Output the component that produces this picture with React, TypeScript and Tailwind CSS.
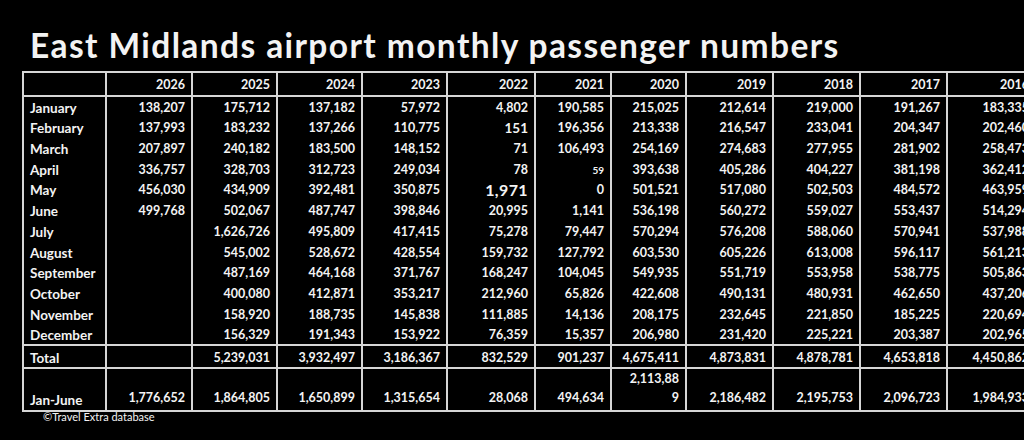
import React from "react";

const years = ["2026", "2025", "2024", "2023", "2022", "2021", "2020", "2019", "2018", "2017", "2016"];

const colWidths = [
  "w-[83px]",
  "w-[86px]",
  "w-[85px]",
  "w-[85px]",
  "w-[85px]",
  "w-[88px]",
  "w-[76px]",
  "w-[75px]",
  "w-[87px]",
  "w-[87px]",
  "w-[87px]",
  "w-[89px]",
];

const months: [string, string[]][] = [
  ["January", ["138,207", "175,712", "137,182", "57,972", "4,802", "190,585", "215,025", "212,614", "219,000", "191,267", "183,335"]],
  ["February", ["137,993", "183,232", "137,266", "110,775", "151", "196,356", "213,338", "216,547", "233,041", "204,347", "202,460"]],
  ["March", ["207,897", "240,182", "183,500", "148,152", "71", "106,493", "254,169", "274,683", "277,955", "281,902", "258,473"]],
  ["April", ["336,757", "328,703", "312,723", "249,034", "78", "59", "393,638", "405,286", "404,227", "381,198", "362,412"]],
  ["May", ["456,030", "434,909", "392,481", "350,875", "1,971", "0", "501,521", "517,080", "502,503", "484,572", "463,959"]],
  ["June", ["499,768", "502,067", "487,747", "398,846", "20,995", "1,141", "536,198", "560,272", "559,027", "553,437", "514,294"]],
  ["July", ["", "1,626,726", "495,809", "417,415", "75,278", "79,447", "570,294", "576,208", "588,060", "570,941", "537,988"]],
  ["August", ["", "545,002", "528,672", "428,554", "159,732", "127,792", "603,530", "605,226", "613,008", "596,117", "561,213"]],
  ["September", ["", "487,169", "464,168", "371,767", "168,247", "104,045", "549,935", "551,719", "553,958", "538,775", "505,863"]],
  ["October", ["", "400,080", "412,871", "353,217", "212,960", "65,826", "422,608", "490,131", "480,931", "462,650", "437,206"]],
  ["November", ["", "158,920", "188,735", "145,838", "111,885", "14,136", "208,175", "232,645", "221,850", "185,225", "220,694"]],
  ["December", ["", "156,329", "191,343", "153,922", "76,359", "15,357", "206,980", "231,420", "225,221", "203,387", "202,965"]],
];

const totals = ["", "5,239,031", "3,932,497", "3,186,367", "832,529", "901,237", "4,675,411", "4,873,831", "4,878,781", "4,653,818", "4,450,862"];
const janJune = ["1,776,652", "1,864,805", "1,650,899", "1,315,654", "28,068", "494,634", "2,113,889", "2,186,482", "2,195,753", "2,096,723", "1,984,933"];

const oddSizes: Record<string, string> = {
  "151": "text-[13.5px]",
  "1,971": "text-[16px] tracking-[0.4px]",
  "59": "text-[10px]",
};

const line = "border-[#d6d6d6]";

export default function App() {
  return (
    <div className="w-[1024px] h-[440px] overflow-hidden bg-black text-[#f3f3f3] font-[Lato,'Open_Sans',sans-serif] font-bold">
      <h1 className="pl-[30px] pt-[27px] text-[33.5px] leading-[36px] tracking-[1.4px] font-bold whitespace-nowrap">
        East Midlands airport monthly passenger numbers
      </h1>

      <table className="mt-[8px] ml-[22px] w-[1015px] table-fixed border-collapse text-[12.5px] leading-[14px]">
        <colgroup>
          {colWidths.map((w, i) => (
            <col key={i} className={w} />
          ))}
        </colgroup>
        <thead>
          <tr className="h-[24px]">
            <td className={`border-2 ${line}`} />
            {years.map((y) => (
              <td key={y} className={`border-2 ${line} pr-[6px] pb-[3px] text-right align-bottom`}>
                {y}
              </td>
            ))}
          </tr>
        </thead>
        <tbody>
          {months.map(([name, vals]) => (
            <tr key={name} className="h-[20.75px]">
              <td className={`border-x-2 ${line} pl-[6px] pt-[2px] text-[13.5px] align-middle`}>{name}</td>
              {vals.map((v, i) => (
                <td key={i} className={`border-x-2 ${line} pr-[6px] pt-[2px] text-right align-middle ${oddSizes[v] ?? ""}`}>
                  {v}
                </td>
              ))}
            </tr>
          ))}
          <tr className="h-[23px]">
            <td className={`border-2 ${line} pl-[6px] pb-[2px] text-[13.5px] align-bottom`}>Total</td>
            {totals.map((v, i) => (
              <td key={i} className={`border-2 ${line} pr-[6px] pb-[2px] text-right align-bottom`}>
                {v}
              </td>
            ))}
          </tr>
          <tr className="h-[38px]">
            <td className={`border-2 ${line} pl-[6px] pb-[3px] text-[13.5px] align-bottom`}>Jan-June</td>
            {janJune.map((v, i) => (
              <td key={i} className={`border-2 ${line} pr-[6px] pb-[3px] text-right align-bottom leading-[19px]`}>
                {v === "2,113,889" ? (
                  <>
                    2,113,88
                    <br />9
                  </>
                ) : (
                  v
                )}
              </td>
            ))}
          </tr>
        </tbody>
      </table>

      <p className="pl-[43px] -mt-[2px] text-[11px] leading-[13px] font-normal">©Travel Extra database</p>
    </div>
  );
}
